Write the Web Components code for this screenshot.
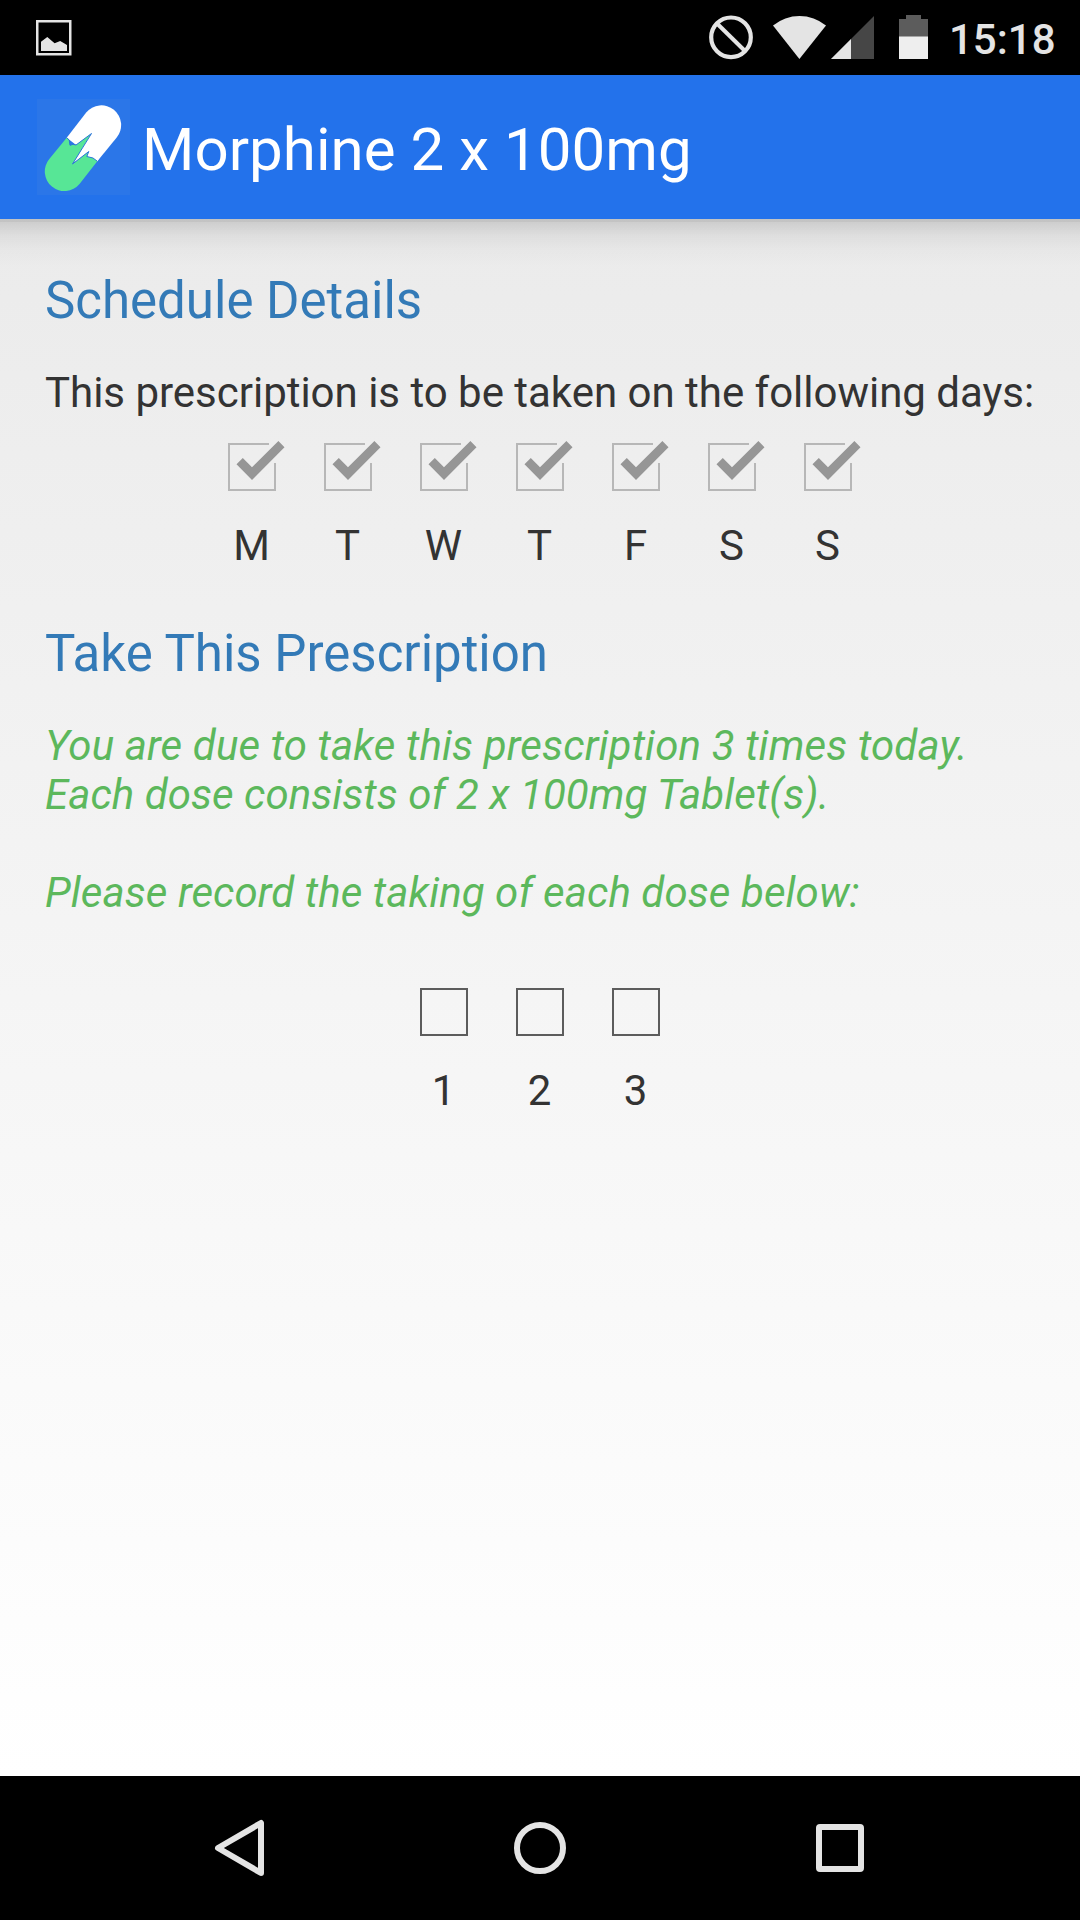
<!DOCTYPE html>
<html lang="en">
<head>
<meta charset="utf-8">
<title>Prescription</title>
<style>
html,body{margin:0;padding:0;background:#000}
body{width:1080px;height:1920px;overflow:hidden;font-family:Roboto,"Noto Sans",sans-serif}
</style>
</head>
<body>
<rx-app></rx-app>
<script>
const define = (name, html) => {
  const t = document.createElement('template');
  t.innerHTML = html;
  customElements.define(name, class extends HTMLElement {
    constructor() {
      super();
      this.attachShadow({ mode: 'open' }).appendChild(t.content.cloneNode(true));
    }
  });
};

define('status-bar', `
<style>
:host{display:flex;height:75px;background:#000;color:#e4e4e4;align-items:flex-start;justify-content:space-between;box-sizing:border-box}
svg{display:block}
.right{display:flex}
.time{font:500 42px/50px Roboto,sans-serif;width:131px;padding:15px 0 0;margin:0;white-space:nowrap}
</style>
<svg width="100" height="75" viewBox="0 0 100 75">
  <rect x="37.25" y="21.25" width="33" height="33" fill="none" stroke="#e4e4e4" stroke-width="2.5"/>
  <path d="M41 51V41.7L47.3 37L54.6 43.3L60.2 41L67 45V51Z" fill="#e4e4e4"/>
</svg>
<div class="right">
  <svg width="249" height="75" viewBox="700 0 249 75">
    <circle cx="731" cy="37.3" r="19.8" fill="none" stroke="#e4e4e4" stroke-width="4.2"/>
    <path d="M717.5 24L745 51" stroke="#e4e4e4" stroke-width="4"/>
    <path d="M799.4 59L773 25.5A42 42 0 0 1 826 25.5Z" fill="#e4e4e4"/>
    <path d="M831 59L874 16V59Z" fill="#464646"/>
    <path d="M831 59L851 39V59Z" fill="#e4e4e4"/>
    <path d="M899 37V19H906V15H921V19H928V37Z" fill="#5c5c5c"/>
    <path d="M899 36.5H928V59H899Z" fill="#eee"/>
  </svg>
  <p class="time">15:18</p>
</div>`);

define('app-header', `
<style>
:host{display:flex;height:144px;background:#2372eb;align-items:center;box-sizing:border-box;padding-left:37px}
svg{display:block;background:#2b76e8}
h1{margin:0 0 0 12px;padding-top:6px;font:400 60px/70px Roboto,sans-serif;letter-spacing:.05px;color:#fff;white-space:nowrap}
</style>
<svg width="93" height="96" viewBox="37 99 93 96">
  <path d="M66.7 137.7L86.2 112.6A19.6 19.6 0 0 1 116.7 137.5L97.3 161.2Z" fill="#fff"/>
  <path d="M66.7 137.7L49.3 159A19.6 19.6 0 0 0 79.5 184L97.3 161.2L93 158L86.8 156.5L88.8 151.5L72.5 164L91.5 133.5L76 145L73 144.3L70 145.3L69.2 140Z" fill="#57e696"/>
  <path d="M72.5 164L88.8 151.5L86.8 156.5L93 158L97.3 161.2L102 153L91.5 133.5Z" fill="#fff"/>
  <path d="M66.7 137.7L69.2 140L70 145.3L73 144.3L76 145L91.5 133.5L72.5 164L88.8 151.5L86.8 156.5L93 158L97.3 161.2" fill="none" stroke="#2b76d8" stroke-width="1"/>
</svg>
<h1><slot></slot></h1>`);

define('section-title', `
<style>
:host{display:block;font:400 51px/60px Roboto,sans-serif;color:#337ab7;white-space:nowrap}
</style><slot></slot>`);

define('check-row', `
<style>:host{display:flex;justify-content:center}</style><slot></slot>`);

define('check-cell', `
<style>
:host{display:flex;flex-direction:column;align-items:center;width:96px;font:400 42px/49px Roboto,sans-serif;color:#333}
svg{display:block;overflow:visible}
.on{display:none}
:host([checked]) .on{display:block}
:host([checked]) .off{display:none}
span{margin-top:30px;padding-right:1px}
</style>
<svg class="off" width="48" height="48" viewBox="0 0 48 48"><rect x="1" y="1" width="46" height="46" fill="none" stroke="#5c5c5c" stroke-width="2"/></svg>
<svg class="on" width="48" height="48" viewBox="0 0 48 48">
  <path d="M41 1H1V47H47V20" fill="none" stroke="#b7b7b7" stroke-width="2"/>
  <path d="M8.5 21.2L14.8 15L24 24.3L50.4 -2L56.5 4.2L24 37Z" fill="#969696"/>
</svg>
<span><slot></slot></span>`);

define('nav-bar', `
<style>
:host{display:flex;height:144px;background:#000;justify-content:center;align-items:center;gap:228px}
svg{display:block}
</style>
<svg width="72" height="72" viewBox="0 0 72 72"><path d="M14 36L57 11V61Z" fill="none" stroke="#e4e4e4" stroke-width="6" stroke-linejoin="round"/></svg>
<svg width="72" height="72" viewBox="0 0 72 72"><circle cx="36" cy="36" r="23" fill="none" stroke="#e4e4e4" stroke-width="6"/></svg>
<svg width="72" height="72" viewBox="0 0 72 72"><rect x="15" y="15" width="42" height="42" rx="1" fill="none" stroke="#e4e4e4" stroke-width="6"/></svg>`);

define('rx-app', `
<style>
:host{display:flex;flex-direction:column;width:1080px;height:1920px}
main{flex:1;box-sizing:border-box;padding:52px 45px 0;
  background:linear-gradient(rgba(0,0,0,.17),rgba(0,0,0,.17)) 0 0/100% 3px no-repeat,
  linear-gradient(rgba(0,0,0,.125),rgba(0,0,0,.055) 14px,rgba(0,0,0,.02) 28px,rgba(0,0,0,0) 45px) 0 3px/100% 45px no-repeat,
  linear-gradient(#ebebeb,#fff)}
.text{margin:0;font:400 42px/49px Roboto,sans-serif;color:#333;white-space:nowrap}
.due{font-style:italic;color:#5cb85c}
.t1{margin-top:37px;letter-spacing:-.015px}
.days{margin-top:26px}
.h2{margin-top:54px}
.t2{margin-top:37px;letter-spacing:.143px}
.dose{letter-spacing:.05px}
.gap{margin-top:49px;letter-spacing:.085px}
.doses{margin-top:71px}
</style>
<status-bar></status-bar>
<app-header>Morphine 2 x 100mg</app-header>
<main>
  <section-title>Schedule Details</section-title>
  <p class="text t1">This prescription is to be taken on the following days:</p>
  <check-row class="days">
    <check-cell checked>M</check-cell><check-cell checked>T</check-cell><check-cell checked>W</check-cell><check-cell checked>T</check-cell><check-cell checked>F</check-cell><check-cell checked>S</check-cell><check-cell checked>S</check-cell>
  </check-row>
  <section-title class="h2">Take This Prescription</section-title>
  <p class="text due t2">You are due to take this prescription 3 times today.</p>
  <p class="text due dose">Each dose consists of 2 x 100mg Tablet(s).</p>
  <p class="text due gap">Please record the taking of each dose below:</p>
  <check-row class="doses">
    <check-cell>1</check-cell><check-cell>2</check-cell><check-cell>3</check-cell>
  </check-row>
</main>
<nav-bar></nav-bar>`);
</script>
</body>
</html>
